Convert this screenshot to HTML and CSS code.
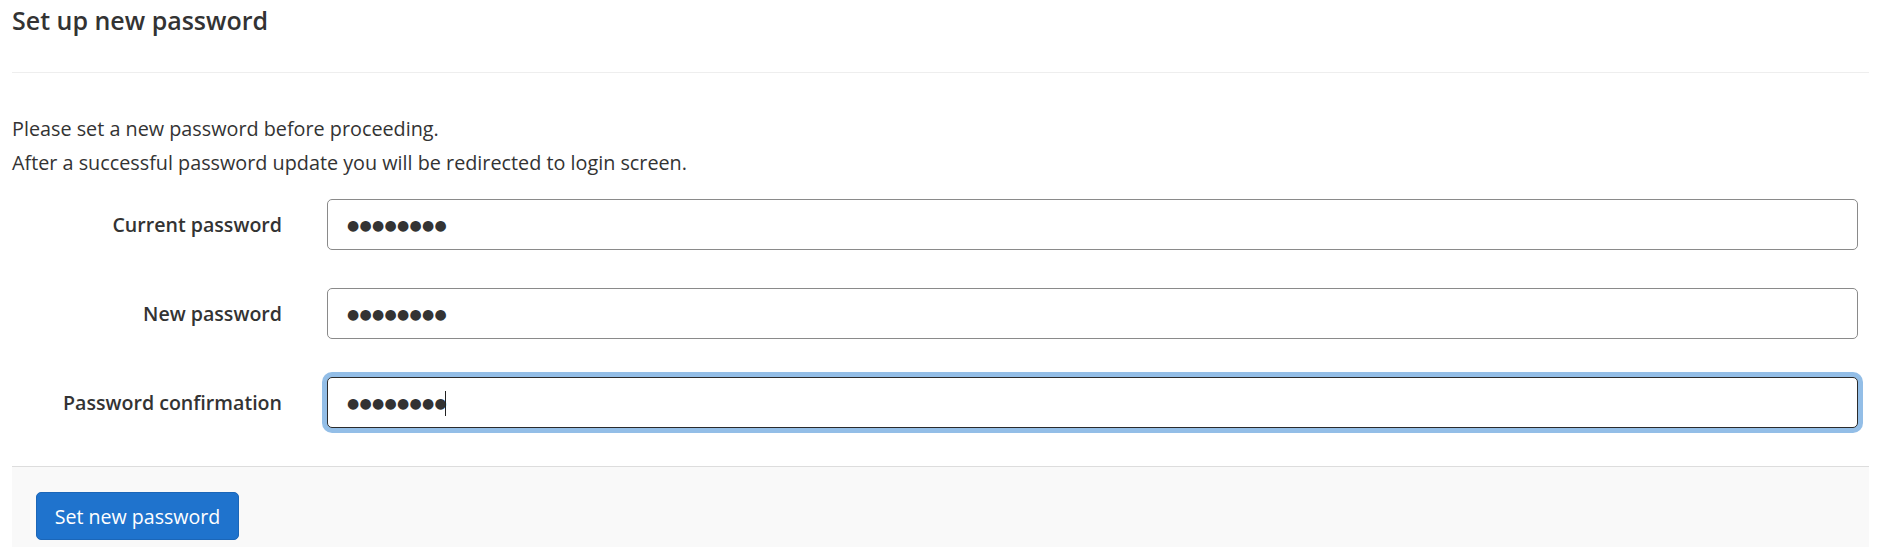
FILE: index.html
```html
<!DOCTYPE html>
<html lang="en">
<head>
<meta charset="utf-8">
<title>Set up new password</title>
<link rel="stylesheet" href="styles.css">
</head>
<body>
<div class="page">
  <h1 class="title">Set up new password</h1>
  <div class="intro">
    <p class="intro-line">Please set a new password before proceeding.</p>
    <p class="intro-line">After a successful password update you will be redirected to login screen.</p>
  </div>
  <form class="form">
    <div class="fields">
      <div class="row">
        <label class="label" for="cur">Current password</label>
        <input class="input" id="cur" type="text" value="●●●●●●●●" autocomplete="off">
      </div>
      <div class="row">
        <label class="label" for="new">New password</label>
        <input class="input" id="new" type="text" value="●●●●●●●●" autocomplete="off">
      </div>
      <div class="row">
        <label class="label" for="conf">Password confirmation</label>
        <div class="input-wrap">
          <input class="input is-focused" id="conf" type="text" value="●●●●●●●●" autocomplete="off">
          <span class="caret"></span>
        </div>
      </div>
    </div>
    <div class="footer">
      <button class="btn" type="button">Set new password</button>
    </div>
  </form>
</div>
</body>
</html>
```
FILE: styles.css
```css
html, body {
  margin: 0;
  padding: 0;
  background: #fff;
}
body {
  font-family: "Open Sans", "Noto Sans", sans-serif;
  color: #333;
  font-size: 19.6px;
}
.page {
  padding: 0 12px;
}
.title {
  margin: 0;
  padding: 4px 0 0 0;
  font-size: 25px;
  font-weight: 650;
  line-height: 32px;
  border-bottom: 1px solid #eeeeee;
  box-sizing: border-box;
  height: 73px;
}
.intro {
  padding-top: 39px;
}
.intro-line {
  margin: 0;
  line-height: 34px;
  font-size: 19.8px;
}
.fields {
  padding-top: 19px;
  padding-bottom: 38px;
  display: flex;
  flex-direction: column;
  gap: 38px;
}
.row {
  display: grid;
  grid-template-columns: 270px 1531px;
  column-gap: 45px;
  align-items: center;
}
.label {
  text-align: right;
  font-weight: 600;
  font-size: 19.6px;
}
.input-wrap {
  position: relative;
}
.input {
  display: block;
  box-sizing: border-box;
  width: 1531px;
  height: 51px;
  border: 1px solid #8a8a8a;
  border-radius: 5px;
  padding: 0 19px;
  font-family: "DejaVu Sans", sans-serif;
  font-size: 14px;
  letter-spacing: 0.3px;
  color: #333;
  background: #fff;
  outline: none;
}
.input.is-focused {
  border-color: #2b2b2b;
  box-shadow: 0 0 0 5px #93bee7;
}
.caret {
  position: absolute;
  left: 118px;
  top: 14px;
  width: 1px;
  height: 25px;
  background: #222;
}
.footer {
  border-top: 1px solid #dddddd;
  background: #f9f9f9;
  padding: 25px 24px 30px;
}
.btn {
  display: block;
  height: 48px;
  width: 203px;
  padding: 0;
  border: 1px solid #1b66b8;
  border-radius: 5px;
  background: #1f73cd;
  color: #fff;
  font-family: "Open Sans", sans-serif;
  font-size: 19.6px;
}
```
